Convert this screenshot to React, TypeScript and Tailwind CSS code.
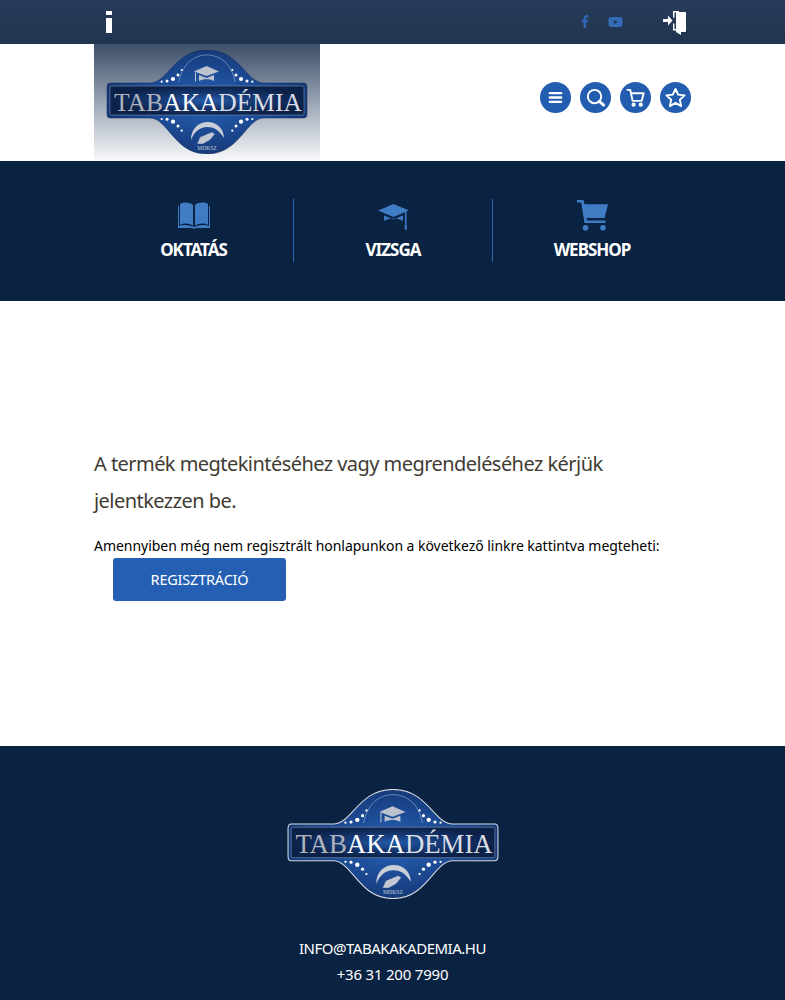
import { FaFacebookF, FaYoutube } from "react-icons/fa";

const font = { fontFamily: '"Noto Sans", sans-serif' };

// dots sit along the shoulders of the badge, mirrored around x=101
const dotArc = [
  [55.7, 1.1],
  [61, 1.5],
  [67, 2.1],
  [72, 1.5],
  [75.7, 1.1],
];

function Logo({ outlined, className }: { outlined?: boolean; className: string }) {
  const id = outlined ? "footer" : "header";
  const topY = [31.7, 31, 29, 25, 20];
  const bottomY = [69, 69.3, 71.7, 76, 80.7];
  return (
    <svg viewBox="0 0 202 104" className={className}>
      <defs>
        <radialGradient id={`${id}-fill`} cx="50%" cy="50%" r="55%">
          <stop offset="0%" stopColor="#2763b6" />
          <stop offset="60%" stopColor="#1b478f" />
          <stop offset="100%" stopColor="#143672" />
        </radialGradient>
        <radialGradient id={`${id}-band`} cx="50%" cy="50%" r="50%">
          <stop offset="0%" stopColor="#235aa8" />
          <stop offset="55%" stopColor="#15366f" />
          <stop offset="100%" stopColor="#0b2148" />
        </radialGradient>
      </defs>
      <path
        d="M4 33H44C62 33 68 0 101 0C134 0 140 33 158 33H198Q201 33 201 37V64Q201 68 198 68H158C140 68 134 104 101 104C68 104 62 68 44 68H4Q1 68 1 64V37Q1 33 4 33Z"
        fill={`url(#${id}-fill)`}
        stroke={outlined ? "#d5d9e0" : "#0f2a58"}
        strokeWidth={outlined ? 1 : 0.5}
      />
      <rect x="4" y="36" width="194" height="29" rx="1.5" fill={`url(#${id}-band)`} stroke="#8fa3c4" strokeWidth="0.5" />
      <path d="M73 32C76 15 87 5 101 5C115 5 126 15 129 32" fill="none" stroke="#8fb0dc" strokeWidth="0.6" />
      <text x="8" y="61" fontSize="26" textLength="188" lengthAdjust="spacingAndGlyphs" fontFamily='"Liberation Serif", serif' fill="#aeb3bc">
        TAB<tspan fill="#ffffff">AKA</tspan><tspan fill="#d9dde4">DÉMIA</tspan>
      </text>
      {dotArc.map(([x, r], i) => (
        <g key={i} fill="#ffffff">
          <circle cx={x} cy={topY[i]} r={r} />
          <circle cx={202 - x} cy={topY[i]} r={r} />
          <circle cx={x} cy={bottomY[i]} r={r} />
          <circle cx={202 - x} cy={bottomY[i]} r={r} />
        </g>
      ))}
      <path d="M100.5 16L113 21.5L100.5 26L88 21.5Z" fill="#bcc3cf" />
      <path d="M93 25V31C97 28.5 104 28.5 108 31V25L100.5 28Z" fill="#bcc3cf" />
      <path d="M89.5 22.5V31.5" stroke="#bcc3cf" strokeWidth="1" />
      <path d="M85 90C85 79 92 72 102 72C111 72 118 79 118 88C113 80 108 77 101 77C94 77 88 82 85 90Z" fill="#c9ced7" />
      <path d="M91 94L94 87L106 82L109 84L104 90L97 94Z" fill="#c3c9d3" stroke="#1c4b96" strokeWidth="0.5" />
      <text x="101" y="99.5" fontSize="5.5" textAnchor="middle" fontFamily='"Liberation Serif", serif' fill="#c9d0dc">
        MDKSZ
      </text>
    </svg>
  );
}

function RoundIcon({ children }: { children: React.ReactNode }) {
  return (
    <div className="flex h-[31px] w-[31px] items-center justify-center rounded-full bg-[#235db0]">
      <svg viewBox="0 0 24 24" className="h-[23px] w-[23px]" fill="none" stroke="#ffffff" strokeWidth="2" strokeLinecap="round" strokeLinejoin="round">
        {children}
      </svg>
    </div>
  );
}

function NavItem({ label, icon, className }: { label: string; icon: React.ReactNode; className: string }) {
  return (
    <div className={`flex h-[63px] flex-col items-center justify-between ${className}`}>
      <div className="flex h-[32px] items-center text-[#3f7cc4]">{icon}</div>
      <span className="text-[17px] leading-[24px] font-bold tracking-[-1px] text-white">{label}</span>
    </div>
  );
}

export default function App() {
  return (
    <div className="h-[1000px] overflow-hidden bg-white" style={font}>
      <div className="h-[44px] bg-gradient-to-b from-[#273c59] to-[#21344f]">
        <div className="mx-auto flex h-full w-[597px] items-center justify-between">
          <svg viewBox="0 0 6 22" className="ml-[12px] h-[22px] w-[6px]" fill="#ffffff">
            <rect width="6" height="4" />
            <rect y="7" width="6" height="15" />
          </svg>
          <div className="flex items-center">
            <FaFacebookF className="-mt-px h-[13px] w-[8px] text-[#2f66b2]" />
            <FaYoutube className="-mt-px ml-[19px] h-[14px] w-[15px] text-[#356cb8]" />
            <svg viewBox="0 0 24 24" className="mt-px mr-[4px] ml-[40px] h-[24px] w-[24px]" fill="#ffffff">
              <path d="M0 8H5V4.5L9.5 9.5L5 14.5V11H0Z" />
              <path d="M13 1H22Q23 1 23 2V20Q23 21 22 21H18V24L13 21Z" />
              <path d="M10 6.5V0H16V1.5H11.5V6.5Z" />
              <path d="M10 12.5H11.5V18H14V19.5H10Z" />
            </svg>
          </div>
        </div>
      </div>

      <div className="h-[117px]">
        <div className="mx-auto flex h-full w-[597px] justify-between">
          <div className="flex h-[116px] w-[226px] items-start justify-center bg-gradient-to-b from-[#3e4f69] via-[#9aa5b4] to-[#f7f8f9] pt-[6px]">
            <Logo className="h-[104px] w-[202px]" />
          </div>
          <div className="flex items-center gap-[9px] pb-[10px]">
            <RoundIcon>
              <path d="M6 7.5H18M6 12H18M6 16.5H18" strokeWidth="2.4" />
            </RoundIcon>
            <RoundIcon>
              <circle cx="11" cy="11" r="7" />
              <path d="M16 16L20.5 20" strokeWidth="3" />
            </RoundIcon>
            <RoundIcon>
              <path d="M3.5 4H6.5L9 15.5H18.5L20.5 7.5H7.5" />
              <circle cx="10" cy="19.5" r="1.2" fill="#ffffff" />
              <circle cx="17.5" cy="19.5" r="1.2" fill="#ffffff" />
            </RoundIcon>
            <RoundIcon>
              <path d="M12 3L14.8 9L21.5 9.8L16.5 14.3L17.9 21L12 17.6L6.1 21L7.5 14.3L2.5 9.8L9.2 9Z" />
            </RoundIcon>
          </div>
        </div>
      </div>

      <div className="h-[140px] bg-[#0a2342] pt-[38px]">
        <div className="mx-auto flex w-[597px]">
          <NavItem
            className="w-[200px] border-r border-[#2c66ad]"
            label="OKTATÁS"
            icon={
              <svg viewBox="0 0 32 27" className="h-[27px] w-[32px]" fill="currentColor">
                <path d="M2 2C6 0 11 0 15 3V24C11 21 6 21 2 23Z" />
                <path d="M30 2C26 0 21 0 17 3V24C21 21 26 21 30 23Z" />
                <path d="M0 4H1V24C6 22 11 23 16 25C21 23 26 22 31 24V4H32V26H18L16 27L14 26H0Z" />
              </svg>
            }
          />
          <NavItem
            className="w-[199px] border-r border-[#2c66ad]"
            label="VIZSGA"
            icon={
              <svg viewBox="0 0 31 26" className="mt-[4px] h-[26px] w-[31px]" fill="currentColor">
                <path d="M15.5 0L31 6.5L15.5 13L0 6.5Z" />
                <path d="M6 11.5V17C10 13.5 21 13.5 25 17V11.5L15.5 15.5Z" />
                <rect x="27" y="8" width="1.5" height="14" />
                <rect x="26.7" y="21" width="2.1" height="5" rx="1" />
              </svg>
            }
          />
          <NavItem
            className="w-[198px]"
            label="WEBSHOP"
            icon={
              <svg viewBox="0 0 31 31" className="h-[31px] w-[31px]" fill="currentColor">
                <path d="M0 0H6.5L7.5 4.3H31L27.5 18H9.5L10 20.5H28.5V23H7.5L4.2 2.6H0Z" />
                <circle cx="8.5" cy="27.7" r="2.8" />
                <circle cx="26" cy="27.7" r="2.8" />
              </svg>
            }
          />
        </div>
      </div>

      <div className="h-[445px]">
        <div className="mx-auto w-[597px] pt-[144px]">
          <h1 className="text-[20px] leading-[37px] tracking-[-0.55px] text-[#3f3c33]">
            A termék megtekintéséhez vagy megrendeléséhez kérjük jelentkezzen be.
          </h1>
          <p className="mt-[17px] text-[14px] leading-[20px] tracking-[-0.04px] text-black">
            Amennyiben még nem regisztrált honlapunkon a következő linkre kattintva megteheti:
          </p>
          <button className="mt-[2px] ml-[19px] block h-[43px] w-[173px] rounded-[3px] bg-[#255fb3] text-[14.5px] tracking-[-0.2px] text-white">
            REGISZTRÁCIÓ
          </button>
        </div>
      </div>

      <div className="flex h-[254px] flex-col items-center bg-[#0a2342] pt-[43px] text-[15px] text-white">
        <Logo outlined className="h-[110px] w-[212px]" />
        <div className="mt-[36px] leading-[26px] tracking-[-0.48px]">INFO@TABAKAKADEMIA.HU</div>
        <div className="leading-[26px] tracking-[-0.2px]">+36 31 200 7990</div>
      </div>
    </div>
  );
}
